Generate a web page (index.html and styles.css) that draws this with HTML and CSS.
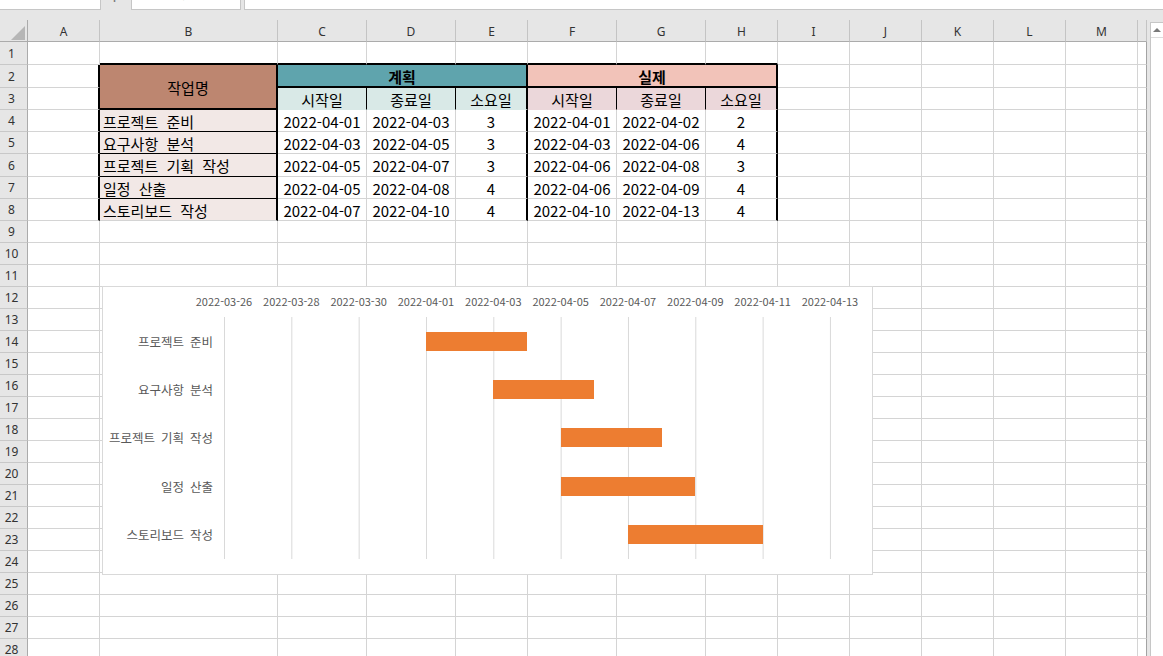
FILE: index.html
```html
<!DOCTYPE html>
<html lang="ko">
<head>
<meta charset="utf-8">
<title>Gantt</title>
<link rel="stylesheet" href="styles.css">
</head>
<body>
<div class="app">
  <div class="fbar">
    <div class="namebox"><span>R33</span></div>
    <div class="fsep"><span>⋮</span></div>
    <div class="fbtns"><span>✕</span><span>✓</span><span>fx</span></div>
    <div class="fgap"></div>
    <div class="finput"></div>
  </div>
  <div class="main">
    <div class="sheet">
      <div class="corner"></div><div class="ch">A</div><div class="ch">B</div><div class="ch">C</div><div class="ch">D</div><div class="ch">E</div><div class="ch">F</div><div class="ch">G</div><div class="ch">H</div><div class="ch">I</div><div class="ch">J</div><div class="ch">K</div><div class="ch">L</div><div class="ch">M</div><div class="ch"></div>

      <div class="rh">1</div><div></div><div class="tb"></div><div class="tb"></div><div class="tb"></div><div class="tb"></div><div class="tb"></div><div class="tb"></div><div class="tb"></div><div></div><div></div><div></div><div></div><div></div><div class="n"></div>

      <div class="rh">2</div><div class="lb"></div><div class="hname">작업명</div><div class="plan">계획</div><div class="act">실제</div><div></div><div></div><div></div><div></div><div></div><div class="n"></div>

      <div class="rh">3</div><div class="lb"></div><div class="ph">시작일</div><div class="ph">종료일</div><div class="ph re">소요일</div><div class="ah">시작일</div><div class="ah">종료일</div><div class="ah re">소요일</div><div></div><div></div><div></div><div></div><div></div><div class="n"></div>

      <div class="rh">4</div><div class="lb"></div><div class="nm">프로젝트 준비</div><div class="d">2022-04-01</div><div class="d">2022-04-03</div><div class="d re">3</div><div class="d">2022-04-01</div><div class="d">2022-04-02</div><div class="d re">2</div><div></div><div></div><div></div><div></div><div></div><div class="n"></div>

      <div class="rh">5</div><div class="lb"></div><div class="nm">요구사항 분석</div><div class="d">2022-04-03</div><div class="d">2022-04-05</div><div class="d re">3</div><div class="d">2022-04-03</div><div class="d">2022-04-06</div><div class="d re">4</div><div></div><div></div><div></div><div></div><div></div><div class="n"></div>

      <div class="rh">6</div><div class="lb"></div><div class="nm">프로젝트 기획 작성</div><div class="d">2022-04-05</div><div class="d">2022-04-07</div><div class="d re">3</div><div class="d">2022-04-06</div><div class="d">2022-04-08</div><div class="d re">3</div><div></div><div></div><div></div><div></div><div></div><div class="n"></div>

      <div class="rh">7</div><div class="lb"></div><div class="nm">일정 산출</div><div class="d">2022-04-05</div><div class="d">2022-04-08</div><div class="d re">4</div><div class="d">2022-04-06</div><div class="d">2022-04-09</div><div class="d re">4</div><div></div><div></div><div></div><div></div><div></div><div class="n"></div>

      <div class="rh">8</div><div class="lb"></div><div class="nm last">스토리보드 작성</div><div class="d">2022-04-07</div><div class="d">2022-04-10</div><div class="d re">4</div><div class="d">2022-04-10</div><div class="d">2022-04-13</div><div class="d re">4</div><div></div><div></div><div></div><div></div><div></div><div class="n"></div>

      <div class="rh">9</div><div></div><div></div><div></div><div></div><div></div><div></div><div></div><div></div><div></div><div></div><div></div><div></div><div></div><div class="n"></div>
      <div class="rh">10</div><div></div><div></div><div></div><div></div><div></div><div></div><div></div><div></div><div></div><div></div><div></div><div></div><div></div><div class="n"></div>
      <div class="rh">11</div><div></div><div></div><div></div><div></div><div></div><div></div><div></div><div></div><div></div><div></div><div></div><div></div><div></div><div class="n"></div>
      <div class="rh">12</div><div></div><div></div><div></div><div></div><div></div><div></div><div></div><div></div><div></div><div></div><div></div><div></div><div></div><div class="n"></div>
      <div class="rh">13</div><div></div><div></div><div></div><div></div><div></div><div></div><div></div><div></div><div></div><div></div><div></div><div></div><div></div><div class="n"></div>
      <div class="rh">14</div><div></div><div></div><div></div><div></div><div></div><div></div><div></div><div></div><div></div><div></div><div></div><div></div><div></div><div class="n"></div>
      <div class="rh">15</div><div></div><div></div><div></div><div></div><div></div><div></div><div></div><div></div><div></div><div></div><div></div><div></div><div></div><div class="n"></div>
      <div class="rh">16</div><div></div><div></div><div></div><div></div><div></div><div></div><div></div><div></div><div></div><div></div><div></div><div></div><div></div><div class="n"></div>
      <div class="rh">17</div><div></div><div></div><div></div><div></div><div></div><div></div><div></div><div></div><div></div><div></div><div></div><div></div><div></div><div class="n"></div>
      <div class="rh">18</div><div></div><div></div><div></div><div></div><div></div><div></div><div></div><div></div><div></div><div></div><div></div><div></div><div></div><div class="n"></div>
      <div class="rh">19</div><div></div><div></div><div></div><div></div><div></div><div></div><div></div><div></div><div></div><div></div><div></div><div></div><div></div><div class="n"></div>
      <div class="rh">20</div><div></div><div></div><div></div><div></div><div></div><div></div><div></div><div></div><div></div><div></div><div></div><div></div><div></div><div class="n"></div>
      <div class="rh">21</div><div></div><div></div><div></div><div></div><div></div><div></div><div></div><div></div><div></div><div></div><div></div><div></div><div></div><div class="n"></div>
      <div class="rh">22</div><div></div><div></div><div></div><div></div><div></div><div></div><div></div><div></div><div></div><div></div><div></div><div></div><div></div><div class="n"></div>
      <div class="rh">23</div><div></div><div></div><div></div><div></div><div></div><div></div><div></div><div></div><div></div><div></div><div></div><div></div><div></div><div class="n"></div>
      <div class="rh">24</div><div></div><div></div><div></div><div></div><div></div><div></div><div></div><div></div><div></div><div></div><div></div><div></div><div></div><div class="n"></div>
      <div class="rh">25</div><div></div><div></div><div></div><div></div><div></div><div></div><div></div><div></div><div></div><div></div><div></div><div></div><div></div><div class="n"></div>
      <div class="rh">26</div><div></div><div></div><div></div><div></div><div></div><div></div><div></div><div></div><div></div><div></div><div></div><div></div><div></div><div class="n"></div>
      <div class="rh">27</div><div></div><div></div><div></div><div></div><div></div><div></div><div></div><div></div><div></div><div></div><div></div><div></div><div></div><div class="n"></div>
      <div class="rh">28</div><div></div><div></div><div></div><div></div><div></div><div></div><div></div><div></div><div></div><div></div><div></div><div></div><div></div><div class="n"></div>
    </div>
    <div class="vscroll"><div class="vtrack"><div class="vup"></div></div></div>

    <div class="chart">
      <div class="xaxis">
        <span>2022-03-26</span><span>2022-03-28</span><span>2022-03-30</span><span>2022-04-01</span><span>2022-04-03</span><span>2022-04-05</span><span>2022-04-07</span><span>2022-04-09</span><span>2022-04-11</span><span>2022-04-13</span>
      </div>
      <div class="cbody">
        <div class="cats">
          <div>프로젝트 준비</div>
          <div>요구사항 분석</div>
          <div>프로젝트 기획 작성</div>
          <div>일정 산출</div>
          <div>스토리보드 작성</div>
        </div>
        <div class="plot">
          <div class="prow"><div class="bar" style="margin-left:202px;width:101px"></div></div>
          <div class="prow"><div class="bar" style="margin-left:269.3px;width:101px"></div></div>
          <div class="prow"><div class="bar" style="margin-left:336.7px;width:101px"></div></div>
          <div class="prow"><div class="bar" style="margin-left:336.7px;width:134.7px"></div></div>
          <div class="prow"><div class="bar" style="margin-left:404px;width:134.7px"></div></div>
        </div>
      </div>
    </div>
  </div>
</div>
</body>
</html>
```
FILE: styles.css
```css
* { box-sizing: border-box; }
html, body { margin: 0; padding: 0; }
body {
  width: 1163px;
  height: 656px;
  overflow: hidden;
  background: #fff;
  font-family: "Noto Sans CJK KR", "Noto Sans", sans-serif;
}
.app {
  display: flex;
  flex-direction: column;
  height: 656px;
  overflow: hidden;
}

/* formula bar */
.fbar {
  flex: none;
  height: 20px;
  background: #e6e6e6;
  display: flex;
  align-items: flex-start;
}
.namebox {
  width: 101px;
  height: 10px;
  background: #fff;
  border-right: 1px solid #c6c6c6;
  border-bottom: 1px solid #c6c6c6;
  overflow: hidden;
  padding-left: 7px;
  font: 13px "Noto Sans", sans-serif;
  color: #333;
}
.namebox span { display: block; line-height: 16px; margin-top: -13px; }
.fsep {
  width: 30px;
  height: 10px;
  overflow: hidden;
  text-align: center;
  font: 13px "Noto Sans", sans-serif;
  color: #777;
}
.fsep span { display: block; line-height: 16px; margin-top: -13px; padding-right: 3px; }
.fbtns {
  width: 110px;
  height: 10px;
  background: #fff;
  border: 1px solid #c6c6c6;
  border-top: none;
  overflow: hidden;
  display: flex;
  justify-content: space-around;
  padding: 0 10px;
  font: 13px "Noto Sans", sans-serif;
  color: #9a9a9a;
}
.fbtns span { display: block; line-height: 16px; margin-top: -13px; }
.fgap { width: 3px; height: 10px; }
.finput {
  flex: 1;
  height: 10px;
  background: #fff;
  border-left: 1px solid #c6c6c6;
  border-bottom: 1px solid #c6c6c6;
}

/* sheet */
.main {
  flex: 1;
  min-height: 0;
  display: flex;
  position: relative;
}
.sheet {
  width: 1147px;
  flex: none;
  display: grid;
  grid-template-columns: 28px 72px 178px 89px 89px 72px 89px 89px 72px 72px 72px 72px 72px 72px 9px;
  grid-template-rows: 22px 23px 23px 22px 22px 22px 23px 22px 22px repeat(20, 22px);
  align-content: start;
}
.sheet > * {
  background: #fff;
  border-right: 1px solid #d4d4d4;
  border-bottom: 1px solid #d4d4d4;
  min-width: 0;
}
.sheet > .n { border-right: 1px solid #a3a3a3; }
.corner {
  background: #e6e6e6 !important;
  border-right-color: #ababab !important;
  border-bottom-color: #ababab !important;
  display: flex;
  align-items: flex-end;
  justify-content: flex-end;
  padding: 0 2px 1px 0;
}
.corner::after {
  content: "";
  border-left: 14px solid transparent;
  border-bottom: 14px solid #b6b6b6;
}
.sheet > .ch {
  background: #e6e6e6;
  border-right-color: #c4c4c4;
  border-bottom-color: #ababab;
  display: flex;
  align-items: center;
  justify-content: center;
  font: 12px "Noto Sans", sans-serif;
  color: #333;
  padding-top: 1px;
}
.sheet > .rh {
  background: #e6e6e6;
  border-right-color: #ababab;
  border-bottom-color: #c8c8c8;
  display: flex;
  align-items: center;
  justify-content: center;
  padding-right: 4px;
  font: 12px "Noto Sans", sans-serif;
  color: #333;
}

/* table */
.hname, .plan, .act, .ph, .ah, .nm, .d {
  display: flex;
  align-items: center;
  justify-content: center;
  font-size: 15px;
  color: #000;
  white-space: nowrap;
  padding-top: 1px;
}
.tb { border-bottom: 2px solid #000; }
.lb { border-right: 2px solid #000; }
.hname {
  grid-row: span 2;
  background: #bd8670;
  border-right: 2px solid #000;
  border-bottom: 2px solid #000;
}
.plan {
  grid-column: span 3;
  background: #5fa4ad;
  font-weight: 700;
  border-right: 2px solid #000;
  border-bottom: 2px solid #000;
}
.act {
  grid-column: span 3;
  background: #f2c3b9;
  font-weight: 700;
  border-right: 2px solid #000;
  border-bottom: 2px solid #000;
}
.ph {
  background: #d9e9e7;
  border-right: 1px solid #000;
  border-bottom-color: #d9e9e7;
}
.ah {
  background: #ebd7da;
  border-right: 1px solid #000;
  border-bottom-color: #ebd7da;
}
.nm {
  background: #f2e8e6;
  justify-content: flex-start;
  padding-left: 3px;
  word-spacing: 4px;
  border-right: 2px solid #000;
  border-bottom: 1px solid #000;
}
.nm.last { border-bottom-color: #d4d4d4; }
.re { border-right: 2px solid #000; }

/* scrollbar */
.vscroll {
  width: 16px;
  flex: none;
  background: #e6e6e6;
  padding: 2px 0 0 3px;
}
.vtrack {
  height: 100%;
  background: #fff;
  border-left: 1px solid #c6c6c6;
  border-top: 1px solid #c6c6c6;
}
.vup {
  height: 15px;
  border-bottom: 1px solid #dcdcdc;
  display: flex;
  align-items: center;
  justify-content: center;
}
.vup::before {
  content: "";
  border-left: 4px solid transparent;
  border-right: 4px solid transparent;
  border-bottom: 4px solid #7a7a7a;
}

/* chart (floats over the sheet) */
.chart {
  position: absolute;
  left: 102px;
  top: 266px;
  width: 771px;
  height: 289px;
  background: #fff;
  border: 1px solid #d9d9d9;
  color: #595959;
}
.xaxis {
  height: 30px;
  padding: 0 0 2px 87.33px;
  display: flex;
  align-items: center;
  font-size: 11px;
}
.xaxis span {
  flex: 0 0 67.333px;
  text-align: center;
  white-space: nowrap;
}
.cbody {
  display: flex;
  height: 242px;
}
.cats {
  width: 121px;
  flex: none;
  display: grid;
  grid-template-rows: repeat(5, 1fr);
  align-items: center;
  text-align: right;
  padding-right: 11px;
  font-size: 12.5px;
  word-spacing: 2.5px;
  white-space: nowrap;
}
.plot {
  width: 630px;
  flex: none;
  display: grid;
  grid-template-rows: repeat(5, 1fr);
  background-image: linear-gradient(to right, #d9d9d9 0, #d9d9d9 1px, transparent 1px);
  background-size: 67.333px 100%;
}
.prow {
  display: flex;
  align-items: center;
}
.bar {
  height: 19px;
  background: #ed7d31;
}
```
